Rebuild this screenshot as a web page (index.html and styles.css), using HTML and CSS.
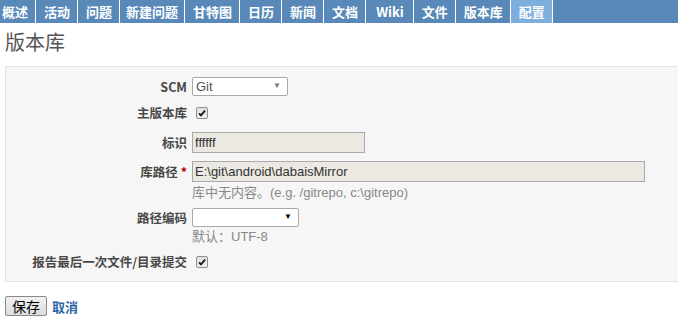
FILE: index.html
```html
<!DOCTYPE html>
<html lang="zh-CN">

<head>
    <meta charset="UTF-8">
    <title>版本库 - 配置</title>
    <link rel="stylesheet" href="styles.css">
</head>

<body>

    <div id="main-menu">
        <ul>
            <li><a href="#" class="first">概述</a></li>
            <li><a href="#">活动</a></li>
            <li><a href="#">问题</a></li>
            <li><a href="#" class="tight">新建问题</a></li>
            <li><a href="#">甘特图</a></li>
            <li><a href="#">日历</a></li>
            <li><a href="#">新闻</a></li>
            <li><a href="#">文档</a></li>
            <li><a href="#" class="wiki">Wiki</a></li>
            <li><a href="#">文件</a></li>
            <li><a href="#">版本库</a></li>
            <li><a href="#" class="selected">配置</a></li>
        </ul>
    </div>

    <div id="content">
        <h2>版本库</h2>

        <form>
            <div class="box tabular">
                <div class="row row-scm">
                    <label>SCM</label>
                    <span class="select-wrap scm-select">
                        <select>
                            <option>Git</option>
                        </select>
                        <span class="arrow">&#9660;</span>
                    </span>
                </div>

                <div class="row row-check">
                    <label>主版本库</label>
                    <span class="check">
                        <svg viewBox="0 0 12 12" width="8" height="8">
                            <path d="M1.5 6.5 L4.5 9.5 L10.5 2.5" fill="none" stroke="#1a1a1a" stroke-width="2.8"></path>
                        </svg>
                    </span>
                </div>

                <div class="row row-ident">
                    <label>标识</label>
                    <input type="text" class="ident" value="ffffff" disabled>
                </div>

                <div class="row row-url">
                    <label>库路径 <span class="required">*</span></label>
                    <div class="field">
                        <input type="text" class="url" value="E:\git\android\dabaisMirror" disabled>
                        <em class="info">库中无内容。(e.g. /gitrepo, c:\gitrepo)</em>
                    </div>
                </div>

                <div class="row row-enc">
                    <label>路径编码</label>
                    <div class="field">
                        <span class="select-wrap enc-select">
                            <select>
                                <option></option>
                            </select>
                            <span class="arrow dark">&#9660;</span>
                        </span>
                        <em class="info info-enc">默认：UTF-8</em>
                    </div>
                </div>

                <div class="row row-check row-last">
                    <label>报告最后一次文件/目录提交</label>
                    <span class="check">
                        <svg viewBox="0 0 12 12" width="8" height="8">
                            <path d="M1.5 6.5 L4.5 9.5 L10.5 2.5" fill="none" stroke="#1a1a1a" stroke-width="2.8"></path>
                        </svg>
                    </span>
                </div>
            </div>

            <div class="actions">
                <button type="button">保存</button>
                <a href="#">取消</a>
            </div>
        </form>
    </div>

</body>

</html>
```

FILE: styles.css
```css
body {
    margin: 0;
    overflow: hidden;
    font-family: "Liberation Sans", "Noto Sans CJK SC", sans-serif;
    font-size: 12px;
    color: #333;
    background: #fff;
}

/* top tabs */
#main-menu {
    background-color: #5889b9;
    height: 23px;
}

#main-menu ul {
    display: flex;
    margin: 0;
    padding: 0;
    list-style: none;
}

#main-menu li a {
    display: block;
    height: 23px;
    line-height: 23px;
    padding: 0 7px 0 8px;
    border-right: 1px solid #fff;
    color: #fff;
    font-weight: bold;
    font-size: 13px;
    text-decoration: none;
    font-family: "Noto Sans CJK SC", sans-serif;
}

#main-menu li a.first {
    padding-left: 2px;
}

#main-menu li a.tight {
    padding: 0 6px;
}

#main-menu li a.wiki {
    padding: 0 9px 0 10px;
}

#main-menu li a.selected {
    background-color: #7eafdc;
}

/* content */
#content {
    padding-left: 5px;
}

h2 {
    margin: 7px 0 0;
    height: 24px;
    line-height: 24px;
    font-size: 20px;
    font-weight: normal;
    color: #555;
    font-family: "Noto Sans CJK SC", serif;
}

.box {
    margin: 12px -6px 0 0;
    padding: 10px 0 10px;
    background-color: #f6f6f6;
    border: 1px solid #e4e4e4;
}

.row {
    display: flex;
    align-items: flex-start;
}

.row label {
    width: 181px;
    flex-shrink: 0;
    margin-right: 5px;
    text-align: right;
    font-weight: bold;
    font-size: 12.5px;
    color: #484848;
    line-height: 19px;
    font-family: "Noto Sans CJK SC", sans-serif;
}

.row .required {
    color: #bb0000;
}

.row-check {
    margin-top: 7px;
    align-items: center;
    height: 19px;
}

.row-ident {
    margin-top: 10px;
}

.row-ident label,
.row-url label {
    line-height: 21px;
}

.row-url {
    margin-top: 8px;
}

.row-enc {
    margin-top: 7px;
}

.check {
    display: flex;
    align-items: center;
    justify-content: center;
    width: 10px;
    height: 10px;
    margin-left: 4px;
    border: 1px solid #8f8f8f;
    border-radius: 2px;
    background: linear-gradient(#e0e0e0, #f2f2f2);
}

/* selects */
.select-wrap {
    position: relative;
    display: block;
}

.select-wrap select {
    appearance: none;
    -webkit-appearance: none;
    display: block;
    height: 19px;
    margin: 0;
    padding: 0 0 0 3px;
    border: 1px solid #a9a9a9;
    border-radius: 2px;
    background: #fff;
    color: #555;
    font-family: "Liberation Sans", sans-serif;
    font-size: 13px;
}

.scm-select select {
    width: 96px;
}

.enc-select select {
    width: 107px;
}

.select-wrap .arrow {
    position: absolute;
    right: 7px;
    top: 5px;
    font-size: 8px;
    line-height: 8px;
    color: #777;
}

.select-wrap .arrow.dark {
    color: #000;
}

/* text inputs */
input[type="text"] {
    display: block;
    box-sizing: border-box;
    height: 21px;
    margin: 0;
    padding: 0 2px;
    border: 1px solid #a9a9a9;
    background-color: #ebe9e2;
    color: #333;
    font-family: "Liberation Sans", sans-serif;
    font-size: 13px;
}

input.ident {
    width: 173px;
}

input.url {
    width: 453px;
}

.info {
    display: block;
    margin-top: 3px;
    line-height: 16px;
    font-style: normal;
    color: #888;
    font-size: 13px;
    font-family: "Liberation Sans", "Noto Sans CJK SC", sans-serif;
}

.info-enc {
    margin-top: 2px;
}

/* bottom buttons */
.actions {
    display: flex;
    align-items: center;
    gap: 5px;
    margin-top: 14px;
}

.actions button {
    width: 42px;
    height: 20px;
    padding: 0;
    border: 1px solid #8a8a8a;
    border-radius: 2px;
    background: linear-gradient(#f2f2f2, #dcdcdc);
    color: #000;
    font-size: 14px;
    line-height: 18px;
    font-family: "Noto Sans CJK SC", sans-serif;
}

.actions a {
    color: #2d64a8;
    font-weight: bold;
    font-size: 13px;
    text-decoration: none;
    font-family: "Noto Sans CJK SC", sans-serif;
}
```
